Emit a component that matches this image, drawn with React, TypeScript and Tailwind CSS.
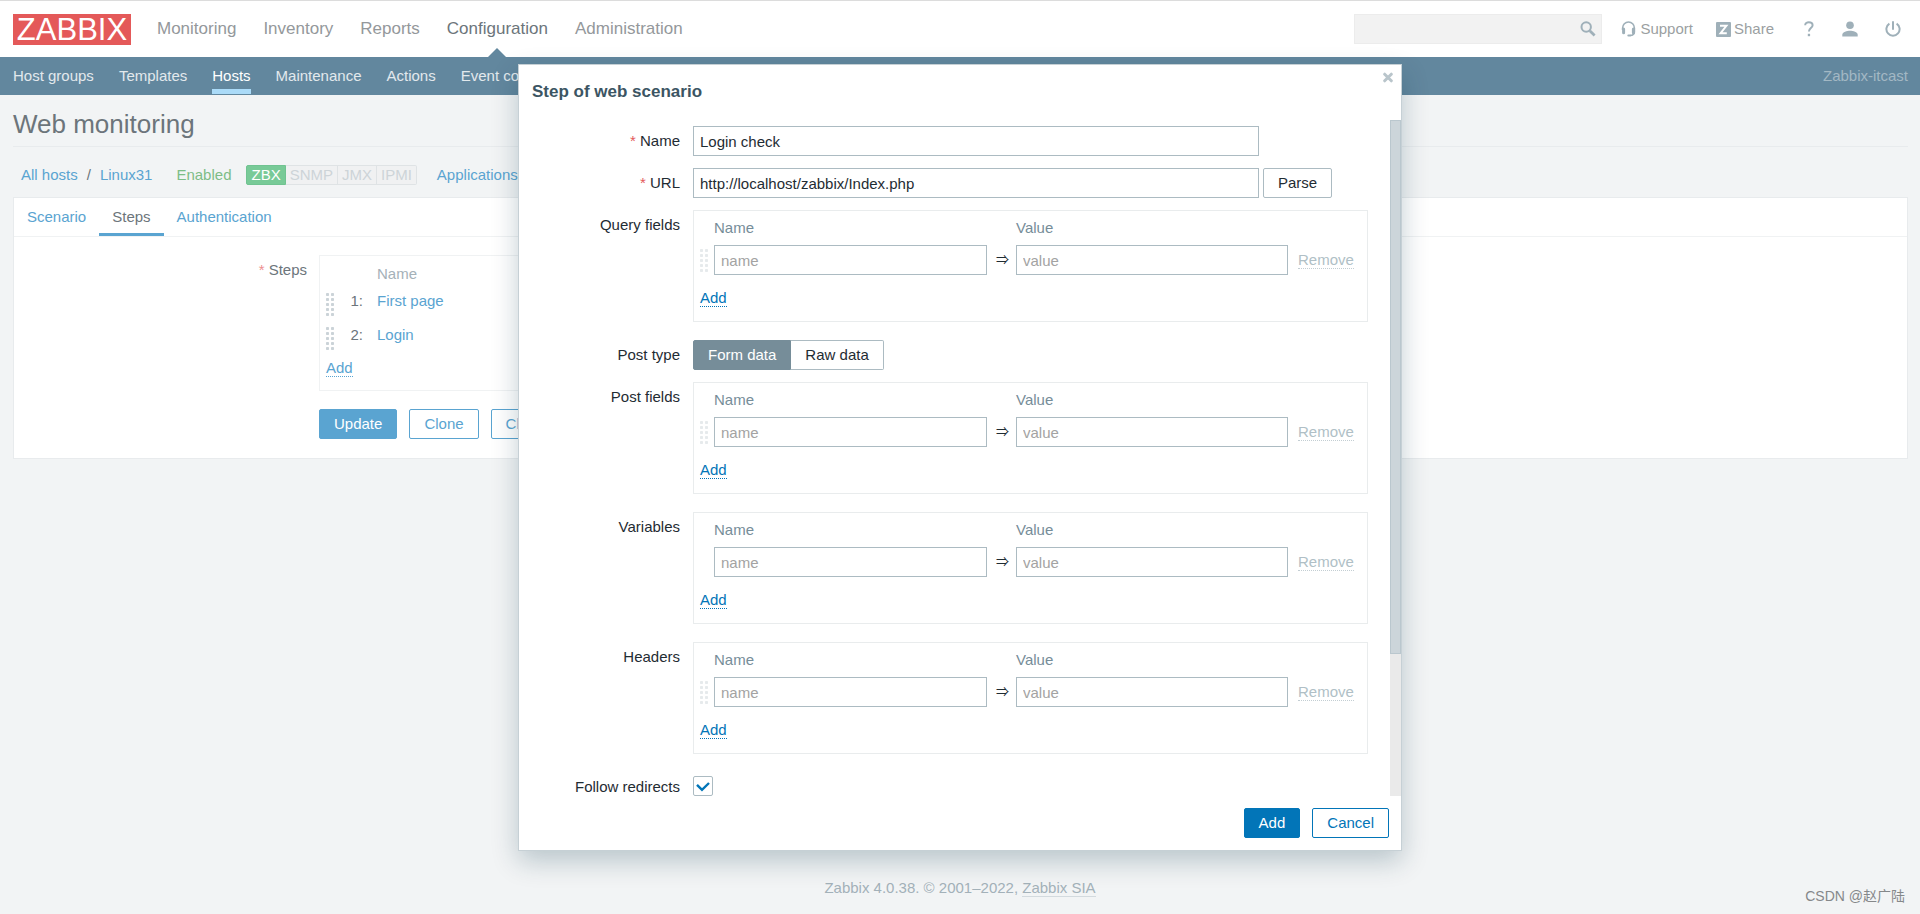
import React, { useState } from "react";
import clsx from "clsx";

const mainMenu = ["Monitoring", "Inventory", "Reports", "Configuration", "Administration"];
const subMenu = ["Host groups", "Templates", "Hosts", "Maintenance", "Actions", "Event correlation"];
const interfaces = ["ZBX", "SNMP", "JMX", "IPMI"];
const tabs = ["Scenario", "Steps", "Authentication"];
const steps = ["First page", "Login"];

const DragHandle = ({ className }: { className: string }) => (
  <svg width="8" height="23" viewBox="0 0 8 23" className={className} fill="currentColor" aria-hidden="true">
    {[0, 5, 10, 15, 20].map((y) => (
      <g key={y}>
        <rect x="0" y={y} width="3" height="3" rx="0.8" />
        <rect x="5" y={y} width="3" height="3" rx="0.8" />
      </g>
    ))}
  </svg>
);

const Header = () => {
  return (
    <header>
      <div className="flex h-[57px] items-center border-t border-[#dcdcdc] bg-white pl-[13px] pr-4">
        <a
          href="#"
          className="flex h-[31px] w-[118px] items-center justify-center bg-[#e45959] text-[31px] leading-[31px] text-white"
        >
          ZABBIX
        </a>
        <ul className="ml-[26px] flex h-full gap-[27px] text-[17px]">
          {mainMenu.map((item) => (
            <li key={item} className="relative flex items-center">
              <a href="#" className={item === "Configuration" ? "text-[#6c757b]" : "text-[#94989b]"}>
                {item}
              </a>
              {item === "Configuration" && (
                <span className="absolute bottom-0 left-1/2 h-0 w-0 -translate-x-1/2 border-x-[9px] border-b-[9px] border-x-transparent border-b-[#62879e]" />
              )}
            </li>
          ))}
        </ul>
        <div className="ml-auto flex items-center text-[15px] text-[#9b9fa2]">
          <div className="relative">
            <input
              type="text"
              aria-label="Search"
              className="block h-[30px] w-[248px] border border-[#ececec] bg-[#f2f2f2] pl-2 pr-8 outline-none"
            />
            <button type="button" aria-label="Search" className="absolute right-1.5 top-[7px]">
              <svg width="16" height="16" viewBox="0 0 16 16" fill="none" stroke="#9fb0b9" aria-hidden="true">
                <circle cx="6.2" cy="6" r="4.7" strokeWidth="2" />
                <path d="M9.8 9.8l4.8 4.6" strokeWidth="2.8" />
              </svg>
            </button>
          </div>
          <a href="#" className="ml-[19px] flex items-center gap-1">
            <svg width="15" height="16" viewBox="0 0 15 16" fill="none" stroke="#9fb0b9" aria-hidden="true">
              <path d="M1.6 9V7a5.9 6 0 0 1 11.8 0v4c0 2-1.5 3.3-4.4 3.5" strokeWidth="1.6" />
              <path d="M2.6 8v3.8M12.4 8v3.8" strokeWidth="3" strokeLinecap="round" />
              <path d="M7.4 14.5h1.6" strokeWidth="2.2" strokeLinecap="round" />
            </svg>
            Support
          </a>
          <a href="#" className="ml-[23px] flex items-center gap-[3px]">
            <svg width="15" height="15" viewBox="0 0 15 15" aria-hidden="true">
              <rect width="15" height="15" rx="1" fill="#9fb0b9" />
              <path d="M4 3.8h6.4L4.6 11.2h6.2" fill="none" stroke="#fff" strokeWidth="2" />
            </svg>
            Share
          </a>
          <a href="#" aria-label="Help" className="ml-[30px]">
            <svg width="10" height="16" viewBox="0 0 10 16" fill="none" stroke="#9fb0b9" aria-hidden="true">
              <path d="M1.2 4.2C1.2 2.3 2.8 1.2 4.8 1.2S8.6 2.3 8.6 4.2c0 2.9-3.7 3-3.7 6.4" strokeWidth="2" />
              <path d="M3.8 14h2.3" strokeWidth="2.4" />
            </svg>
          </a>
          <a href="#" aria-label="User profile" className="ml-7">
            <svg width="16" height="16" viewBox="0 0 16 16" fill="#9fb0b9" aria-hidden="true">
              <circle cx="8" cy="4.2" r="3.8" />
              <path d="M.3 15.6v-1.8C.3 11 5 9.8 8 9.8s7.7 1.2 7.7 4v1.8z" />
            </svg>
          </a>
          <a href="#" aria-label="Sign out" className="ml-[27px] mr-[3px]">
            <svg width="16" height="16" viewBox="0 0 16 16" fill="none" stroke="#9fb0b9" strokeWidth="2" aria-hidden="true">
              <path d="M8 .3v8.5" />
              <path d="M4.4 2.6a6.6 6.6 0 1 0 7.2 0" />
            </svg>
          </a>
        </div>
      </div>
      <div className="flex h-[38px] items-center justify-between bg-[#62879e] pl-[13px] pr-3 text-[15px]">
        <ul className="flex h-full gap-[25px]">
          {subMenu.map((item) => (
            <li
              key={item}
              className={clsx(
                "relative flex items-center whitespace-nowrap",
                item === "Hosts" ? "text-white" : "text-[#e2e9ed]"
              )}
            >
              <a href="#">{item}</a>
              {item === "Hosts" && <span className="absolute inset-x-0 bottom-px h-[5px] bg-[#abdbf8]" />}
            </li>
          ))}
        </ul>
        <span className="text-[#a3b8c4]">Zabbix-itcast</span>
      </div>
    </header>
  );
};

const HostBar = () => {
  return (
    <nav className="mt-[18px] flex h-5 items-center whitespace-nowrap pl-2 text-[#5aa4d1]">
      <a href="#">All hosts</a>
      <span className="mx-[9px] text-[#6c757b]">/</span>
      <a href="#">Linux31</a>
      <span className="ml-6 text-[#7dbd86]">Enabled</span>
      <div className="ml-[15px] flex">
        {interfaces.map((name) => (
          <span
            key={name}
            className={clsx(
              "border-y border-r px-1 leading-[18px]",
              name === "ZBX"
                ? "rounded-l-xs border-l border-[#70c391] bg-[#78ca97] text-white"
                : "border-[#dfe3e5] bg-[#f0f1f2] text-[#cdd4d8]",
              name === "IPMI" && "rounded-r-xs"
            )}
          >
            {name}
          </span>
        ))}
      </div>
      <a href="#" className="ml-5">
        Applications
      </a>
    </nav>
  );
};

const ScenarioForm = () => {
  return (
    <div className="mt-3 border border-[#e8ebed] bg-white">
      <div className="flex h-[39px] border-b border-[#f0f2f3]">
        {tabs.map((tab) => (
          <button
            key={tab}
            type="button"
            className={clsx(
              "border-b-[3px] px-[13px] pt-0.5",
              tab === "Steps" ? "border-[#5aa4d1] text-[#6c757b]" : "border-transparent text-[#5aa4d1]"
            )}
          >
            {tab}
          </button>
        ))}
      </div>
      <div className="flex gap-3 pb-[19px] pt-[18px]">
        <div className="w-[293px] shrink-0 text-right leading-[30px] text-[#6c757b]">
          <span className="text-[#ee8f8f]">*</span> Steps
        </div>
        <div>
          <div className="w-[800px] border border-[#f0f2f3] pb-1.5 pl-1.5">
            <table className="text-left text-[#5aa4d1]">
              <thead>
                <tr className="h-7 align-bottom">
                  <th className="w-2" />
                  <th className="w-[29px]" />
                  <th className="pl-3.5 font-normal leading-5 text-[#a5b1b8]">Name</th>
                </tr>
              </thead>
              <tbody>
                {steps.map((step, i) => (
                  <tr key={step} className="h-[34px]">
                    <td className="pt-1.5">
                      <DragHandle className="block text-[#cbd3d8]" />
                    </td>
                    <td className="text-right text-[#6c757b]">{i + 1}:</td>
                    <td className="pl-3.5">
                      <a href="#">{step}</a>
                    </td>
                  </tr>
                ))}
              </tbody>
            </table>
            <div className="flex h-8 items-center">
              <button type="button" className="border-b border-dotted border-[#5aa4d1] leading-4 text-[#5aa4d1]">
                Add
              </button>
            </div>
          </div>
          <div className="mt-[18px] flex gap-3">
            <button type="button" className="h-[30px] rounded-xs border border-[#5aa4d1] bg-[#5aa4d1] px-3.5 text-white">
              Update
            </button>
            <button type="button" className="h-[30px] rounded-xs border border-[#5aa4d1] px-3.5 text-[#5aa4d1]">
              Clone
            </button>
            <button type="button" className="h-[30px] rounded-xs border border-[#5aa4d1] px-3.5 text-[#5aa4d1]">
              Clear history and trends
            </button>
          </div>
        </div>
      </div>
    </div>
  );
};

const inputClass =
  "block h-[30px] border border-[#acbbc2] bg-white px-1.5 text-[#1f2c33] outline-none placeholder:text-[#a3a3a3]";

type RowProps = {
  label: string;
  htmlFor?: string;
  required?: boolean;
  children: React.ReactNode;
};

const FormRow = ({ label, htmlFor, required, children }: RowProps) => (
  <div className="flex gap-[13px]">
    <label htmlFor={htmlFor} className="w-[161px] shrink-0 text-right leading-[30px]">
      {required && <span className="text-[#e45959]">* </span>}
      {label}
    </label>
    {children}
  </div>
);

// Name/value pairs table, shared by query fields, post fields, variables and headers
const PairsTable = ({ label, sortable = true }: { label: string; sortable?: boolean }) => {
  return (
    <FormRow label={label}>
      <div className="mb-1.5 w-[675px] border border-[#e9eced] pl-1.5">
        <table className="w-full table-fixed text-left">
          <thead>
            <tr className="h-[34px] text-[#768d99]">
              <th className="w-3.5" />
              <th className="w-[273px] font-normal">Name</th>
              <th className="w-[29px]" />
              <th className="w-[272px] font-normal">Value</th>
              <th />
            </tr>
          </thead>
          <tbody>
            <tr>
              <td>{sortable && <DragHandle className="block text-[#e6eaec]" />}</td>
              <td>
                <input type="text" placeholder="name" aria-label={`${label} name`} className={clsx(inputClass, "w-full")} />
              </td>
              <td className="pl-0.5 text-center text-[13px]">⇒</td>
              <td>
                <input type="text" placeholder="value" aria-label={`${label} value`} className={clsx(inputClass, "w-full")} />
              </td>
              <td className="pl-2.5">
                <button
                  type="button"
                  disabled
                  className="block border-b border-dotted border-[#c3ced3] leading-4 text-[#b0bfc6]"
                >
                  Remove
                </button>
              </td>
            </tr>
          </tbody>
        </table>
        <div className="flex h-[46px] items-center">
          <button type="button" className="border-b border-dotted border-[#0275b8] leading-4 text-[#0275b8]">
            Add
          </button>
        </div>
      </div>
    </FormRow>
  );
};

const StepDialog = () => {
  const [name, setName] = useState("Login check");
  const [url, setUrl] = useState("http://localhost/zabbix/Index.php");
  const [postType, setPostType] = useState("Form data");
  const [follow, setFollow] = useState(true);

  return (
    <div
      role="dialog"
      aria-labelledby="dialog-title"
      className="w-[884px] border border-[#c6d0d5] bg-white text-[#1f2c33] shadow-[0_10px_25px_rgba(0,50,70,0.24)]"
    >
      <div className="flex h-[55px] items-start justify-between pl-[13px] pr-2 pt-[7px]">
        <h4 id="dialog-title" className="pt-2 text-[17px] font-bold leading-6 text-[#3c5563]">
          Step of web scenario
        </h4>
        <button type="button" aria-label="Close">
          <svg width="10" height="11" viewBox="0 0 10 11" stroke="#b9c5cb" strokeWidth="3" strokeLinecap="round" aria-hidden="true">
            <path d="M1.7 2.2l6.6 6.6M8.3 2.2L1.7 8.8" />
          </svg>
        </button>
      </div>
      <div className="flex max-h-[676px] overflow-hidden">
        <div className="flex flex-1 flex-col gap-3 pt-1.5">
          <FormRow label="Name" htmlFor="step-name" required>
            <input
              id="step-name"
              type="text"
              value={name}
              onChange={(e) => setName(e.target.value)}
              className={clsx(inputClass, "w-[566px]")}
            />
          </FormRow>
          <FormRow label="URL" htmlFor="step-url" required>
            <div className="flex gap-1">
              <input
                id="step-url"
                type="text"
                value={url}
                onChange={(e) => setUrl(e.target.value)}
                className={clsx(inputClass, "w-[566px]")}
              />
              <button type="button" className="h-[30px] rounded-xs border border-[#acbbc2] px-3.5">
                Parse
              </button>
            </div>
          </FormRow>
          <PairsTable label="Query fields" />
          <FormRow label="Post type">
            <div className="flex">
              {["Form data", "Raw data"].map((type) => (
                <label
                  key={type}
                  className={clsx(
                    "flex h-[30px] cursor-pointer items-center border px-3.5 first:rounded-l-xs last:rounded-r-xs last:border-l-0",
                    postType === type ? "border-[#768d99] bg-[#768d99] text-white" : "border-[#acbbc2]"
                  )}
                >
                  <input
                    type="radio"
                    name="post-type"
                    checked={postType === type}
                    onChange={() => setPostType(type)}
                    className="sr-only"
                  />
                  {type}
                </label>
              ))}
            </div>
          </FormRow>
          <PairsTable label="Post fields" />
          <PairsTable label="Variables" sortable={false} />
          <PairsTable label="Headers" />
          <FormRow label="Follow redirects" htmlFor="follow-redirects">
            <span className="relative block h-5 w-5">
              <input
                id="follow-redirects"
                type="checkbox"
                checked={follow}
                onChange={(e) => setFollow(e.target.checked)}
                className="mt-1 block h-5 w-5 appearance-none rounded-xs border border-[#acbbc2] bg-white"
              />
              {follow && (
                <svg
                  width="14"
                  height="10"
                  viewBox="0 0 14 10"
                  fill="none"
                  stroke="#0275b8"
                  strokeWidth="2.4"
                  className="pointer-events-none absolute left-[3px] top-2.5"
                  aria-hidden="true"
                >
                  <path d="M1 2.8l5 5L13 1" />
                </svg>
              )}
            </span>
          </FormRow>
        </div>
        {/* scrollbar */}
        <div className="flex w-[11px] flex-col bg-[#eaeaea]">
          <div className="flex-[79] border border-[#bac7ce] bg-[#ccd5da]" />
          <div className="flex-[21]" />
        </div>
      </div>
      <div className="flex justify-end gap-3 px-3 pb-3 pt-3">
        <button type="button" className="h-[30px] rounded-xs border border-[#0275b8] bg-[#0275b8] px-3.5 text-white">
          Add
        </button>
        <button type="button" className="h-[30px] rounded-xs border border-[#0275b8] px-3.5 text-[#0275b8]">
          Cancel
        </button>
      </div>
    </div>
  );
};

const App = () => {
  return (
    <div className="relative flex min-h-screen flex-col overflow-hidden bg-[#f2f4f5] font-['Liberation_Sans',Arial,'Noto_Sans_CJK_SC',sans-serif] text-[15px] leading-5">
      <Header />
      <main className="pl-[13px] pr-3">
        <h1 className="h-[52px] border-b border-[#e8ebed] pt-3 text-[26px] leading-[34px] text-[#6c757b]">Web monitoring</h1>
        <HostBar />
        <ScenarioForm />
      </main>
      <footer className="mt-auto pb-4 text-center text-[#a3b1b9]">
        Zabbix 4.0.38. © 2001–2022,{" "}
        <a href="#" className="border-b border-[#d3dade]">
          Zabbix SIA
        </a>
      </footer>
      <div className="absolute inset-x-0 top-16 flex justify-center">
        <StepDialog />
      </div>
      <span className="absolute bottom-2 right-[15px] text-[14px] text-[#85888a]">CSDN @赵广陆</span>
    </div>
  );
};

export default App;
